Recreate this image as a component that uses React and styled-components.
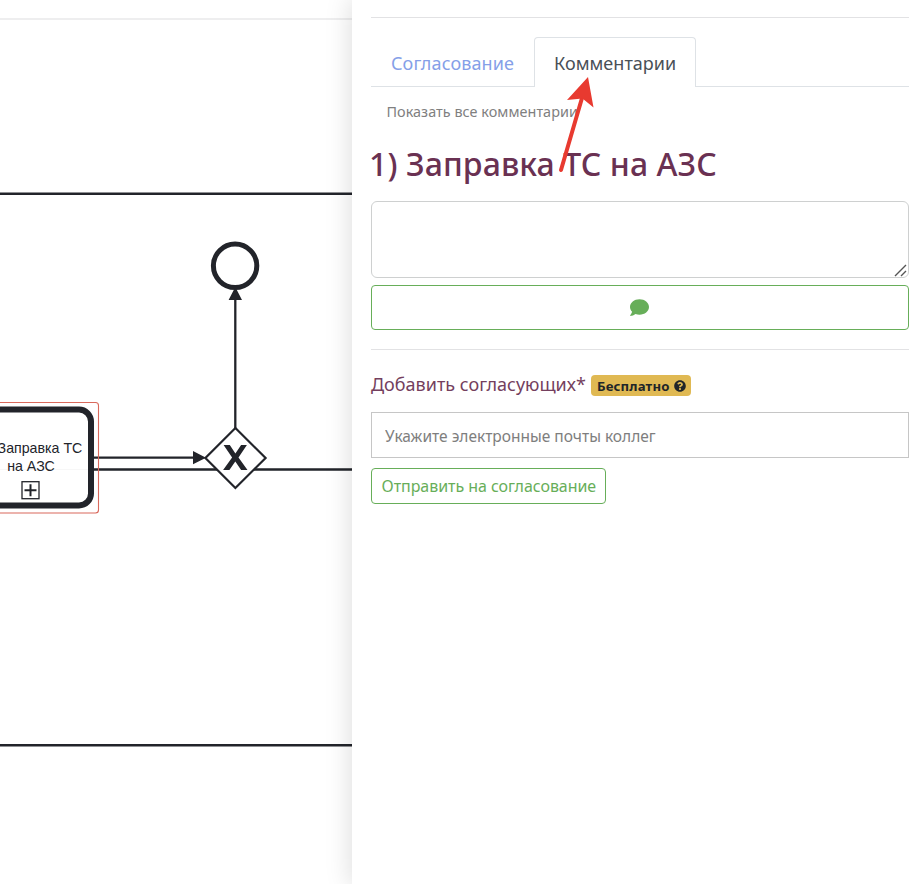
import React from "react";
import styled, { createGlobalStyle } from "styled-components";
import { FaComment, FaQuestionCircle } from "react-icons/fa";

const GlobalStyle = createGlobalStyle`
  * { box-sizing: border-box; }
  body { margin: 0; background: #fff; overflow: hidden; }
`;

const Page = styled.div`
  display: flex;
  width: 915px;
  height: 884px;
  overflow: hidden;
  background: #fff;
  font-family: "Noto Sans", "Open Sans", sans-serif;
`;

const Canvas = styled.main`
  flex: 0 0 352px;
  height: 884px;
`;

const Diagram = styled.svg`
  display: block;
`;

const Panel = styled.aside`
  position: relative;
  flex: 1;
  display: flex;
  flex-direction: column;
  align-items: stretch;
  padding: 17px 6px 0 19px;
  background: #fff;
  box-shadow: 0 0 24px 2px rgba(0, 0, 0, 0.13);
  clip-path: inset(0 0 0 -40px);
`;

const Divider = styled.hr`
  flex: none;
  width: 100%;
  height: 1px;
  margin: 0;
  border: 0;
  background: #e2e2e4;
`;

const Tabs = styled.nav`
  display: flex;
  height: 50px;
  margin-top: 19px;
  border-bottom: 1px solid #dee2e6;
`;

const Tab = styled.button`
  width: ${(p) => p.$width}px;
  height: 50px;
  padding: 0 0 0 ${(p) => (p.$active ? 19 : 20)}px;
  border: 1px solid ${(p) => (p.$active ? "#dee2e6" : "transparent")};
  border-width: ${(p) => (p.$active ? "1px 1px 0" : "0")};
  border-radius: 4px 4px 0 0;
  background: ${(p) => (p.$active ? "#fff" : "transparent")};
  color: ${(p) => (p.$active ? "#495057" : "#859fe8")};
  font: 400 18px/${(p) => (p.$active ? 50 : 52)}px "Noto Sans", sans-serif;
  letter-spacing: ${(p) => p.$spacing}px;
  text-align: left;
  white-space: nowrap;
`;

const ShowAll = styled.a`
  height: 24px;
  margin: 13px 0 0 15.5px;
  color: #808080;
  font-size: 14.4px;
  line-height: 24px;
  letter-spacing: 0.04px;
  white-space: nowrap;
`;

const Title = styled.h2`
  height: 40px;
  margin: 20px 0 1px -2px;
  color: #6a3152;
  font-size: 32px;
  font-weight: 500;
  line-height: 40px;
  letter-spacing: 0.1px;
  white-space: nowrap;
`;

const CommentField = styled.div`
  position: relative;
  flex: none;
  margin-top: 16px;
`;

const CommentBox = styled.textarea`
  display: block;
  width: 100%;
  height: 77px;
  margin: 0;
  border: 1px solid #ced0d0;
  border-radius: 6px;
  outline: 0;
  resize: none;
`;

const ResizeGrip = styled.svg`
  position: absolute;
  right: 2px;
  bottom: 1px;
  pointer-events: none;
`;

const CommentButton = styled.button`
  display: flex;
  flex: none;
  align-items: center;
  justify-content: center;
  width: 100%;
  height: 45px;
  margin: 7px 0 19px;
  padding: 0 2px 0 0;
  border: 1px solid #67ae59;
  border-radius: 4px;
  background: #fff;
  color: #67ae59;
`;

const Approvers = styled.div`
  display: flex;
  align-items: center;
  height: 30px;
  margin-top: 20px;
`;

const ApproversLabel = styled.label`
  width: 220px;
  padding-bottom: 2px;
  color: #743f5e;
  font-size: 18px;
  line-height: 30px;
  white-space: nowrap;
`;

const Badge = styled.span`
  display: flex;
  align-items: center;
  justify-content: space-between;
  width: 100px;
  height: 21px;
  padding: 1px 5px 0 6px;
  border-radius: 4px;
  background: #e0b953;
  color: #212529;
  font-size: 13.2px;
  font-weight: 700;
  letter-spacing: 0.15px;
  white-space: nowrap;
`;

const EmailInput = styled.input`
  width: 100%;
  height: 46px;
  margin-top: 12px;
  padding: 2px 13px 0;
  border: 1px solid #c6c6c6;
  border-radius: 0;
  outline: 0;
  font: 400 15.5px "Noto Sans", sans-serif;
  &::placeholder { color: #7e7e7e; opacity: 1; }
`;

const SendButton = styled.button`
  width: 235px;
  height: 36px;
  margin-top: 10px;
  padding: 0 0 0 9.5px;
  border: 1px solid #67ae59;
  border-radius: 4px;
  background: #fff;
  color: #67ae59;
  font: 400 16px/34px "Noto Sans", sans-serif;
  letter-spacing: -0.05px;
  text-align: left;
  white-space: nowrap;
`;

const Pointer = styled.svg`
  position: absolute;
  left: 200px;
  top: 70px;
  pointer-events: none;
`;

const INK = "#22242a";

function ProcessDiagram() {
  return (
    <Diagram width="352" height="884" viewBox="0 0 352 884">
      <path d="M0 19H352" stroke="#eeeeef" strokeWidth="2" />
      <path d="M0 193.7H352M0 745.2H352M94 469.5H352" stroke={INK} strokeWidth="2.4" />
      <path d="M235.3 428V298M94 457.7H194" stroke={INK} strokeWidth="2.3" />
      <path d="M235.3 287L242 300H228.6ZM206 457.7L193 464.3V451.1Z" fill={INK} />
      <circle cx="235.1" cy="265.8" r="21.7" fill="#fff" stroke={INK} strokeWidth="5" />
      <path d="M235.4 428L265.6 458L235.4 488L205.4 458Z" fill="#fff" stroke={INK} strokeWidth="2.2" />
      <path d="M223.6 445H229.8L235.4 453.6L241.1 445H246.9L238.5 457.4L247.5 470H241.1L235.3 461.4L229.4 470H223.1L232.1 457.4Z" fill={INK} />
      <rect x="-20" y="409.5" width="111" height="96" rx="12" fill="#fff" stroke={INK} strokeWidth="6" />
      <path d="M0 469.5H88" stroke="#f7f7f7" strokeWidth="1" />
      <rect x="-20" y="402.5" width="118.5" height="110.5" rx="3" fill="none" stroke="#d9695c" strokeWidth="1.1" />
      <g fill={INK} fontFamily="Liberation Sans, Arial, sans-serif" fontSize="14.2">
        <text x="82.3" y="453" textAnchor="end">1) Заправка ТС</text>
        <text x="31" y="471" textAnchor="middle">на АЗС</text>
      </g>
      <rect x="22" y="481.7" width="17" height="17" fill="#fff" stroke={INK} strokeWidth="1.3" />
      <path d="M30.5 484.3V496.3M24.5 490.2H36.5" stroke={INK} strokeWidth="2" />
    </Diagram>
  );
}

export default function App() {
  return (
    <>
      <GlobalStyle />
      <Page>
        <Canvas>
          <ProcessDiagram />
        </Canvas>
        <Panel>
          <Divider />
          <Tabs>
            <Tab $width={163} $spacing={0.1}>Согласование</Tab>
            <Tab $width={162} $spacing={0.03} $active>Комментарии</Tab>
          </Tabs>
          <ShowAll>Показать все комментарии</ShowAll>
          <Title>1) Заправка ТС на АЗС</Title>
          <CommentField>
            <CommentBox />
            <ResizeGrip width="13" height="13" viewBox="0 0 13 13">
              <path d="M1 12L12 1M7 12L12 7" stroke="#555" strokeWidth="1.4" />
            </ResizeGrip>
          </CommentField>
          <CommentButton><FaComment size={19} /></CommentButton>
          <Divider />
          <Approvers>
            <ApproversLabel>Добавить согласующих*</ApproversLabel>
            <Badge>Бесплатно <FaQuestionCircle size={12} /></Badge>
          </Approvers>
          <EmailInput placeholder="Укажите электронные почты коллег" />
          <SendButton>Отправить на согласование</SendButton>
          <Pointer width="60" height="110" viewBox="552 70 60 110">
            <path d="M561 170L582 98" stroke="#e83a30" strokeWidth="4" strokeLinecap="round" />
            <path d="M588 77L593.5 107.5L582.5 98.5L567 100Z" fill="#e83a30" />
          </Pointer>
        </Panel>
      </Page>
    </>
  );
}
